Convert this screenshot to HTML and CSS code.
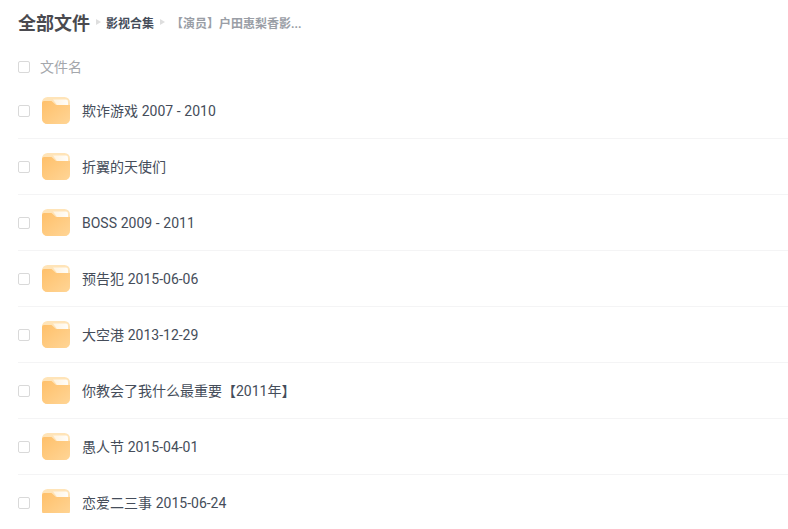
FILE: index.html
```html
<!DOCTYPE html>
<html lang="zh-CN">
<head>
<meta charset="utf-8">
<title>全部文件</title>
<link rel="stylesheet" href="styles.css">
</head>
<body>
<svg class="defs" width="0" height="0" aria-hidden="true">
  <defs>
    <linearGradient id="fg" x1="0" y1="0" x2="1" y2="1">
      <stop offset="0" stop-color="#ffc06a"/>
      <stop offset="1" stop-color="#ffd596"/>
    </linearGradient>
    <linearGradient id="fs" x1="0" y1="0" x2="1" y2="0">
      <stop offset="0" stop-color="#fff3df"/>
      <stop offset="1" stop-color="#fffdf9"/>
    </linearGradient>
  </defs>
  <symbol id="folder" viewBox="0 0 28 27">
    <rect x="0" y="0" width="28" height="27" rx="5.500" fill="#ffe4b8"/>
    <path d="M11 2.500h13a2 2 0 0 1 2 2V8H15z" fill="url(#fs)"/>
    <path d="M0 6a2 2 0 0 1 2-2H9.500L14 8H28V21.500a5.500 5.500 0 0 1-5.500 5.500H5.500a5.500 5.500 0 0 1-5.500-5.500z" fill="url(#fg)"/>
  </symbol>
</svg>
<main class="page">
  <nav class="crumbs">
    <span class="crumb-root">全部文件</span>
    <span class="arrow"></span>
    <span class="crumb-mid">影视合集</span>
    <span class="arrow"></span>
    <span class="crumb-last">【演员】户田惠梨香影...</span>
  </nav>
  <div class="head-row">
    <span class="check"></span>
    <span class="head-label">文件名</span>
  </div>
  <ul class="list">
    <li class="row"><span class="check"></span><svg class="folder"><use href="#folder"/></svg><span class="name">欺诈游戏 2007 - 2010</span></li>
    <li class="row"><span class="check"></span><svg class="folder"><use href="#folder"/></svg><span class="name">折翼的天使们</span></li>
    <li class="row"><span class="check"></span><svg class="folder"><use href="#folder"/></svg><span class="name">BOSS 2009 - 2011</span></li>
    <li class="row"><span class="check"></span><svg class="folder"><use href="#folder"/></svg><span class="name">预告犯 2015-06-06</span></li>
    <li class="row"><span class="check"></span><svg class="folder"><use href="#folder"/></svg><span class="name">大空港 2013-12-29</span></li>
    <li class="row"><span class="check"></span><svg class="folder"><use href="#folder"/></svg><span class="name">你教会了我什么最重要【2011年】</span></li>
    <li class="row"><span class="check"></span><svg class="folder"><use href="#folder"/></svg><span class="name">愚人节 2015-04-01</span></li>
    <li class="row"><span class="check"></span><svg class="folder"><use href="#folder"/></svg><span class="name">恋爱二三事 2015-06-24</span></li>
  </ul>
</main>
</body>
</html>
```
FILE: styles.css
```css
* { box-sizing: border-box; }
html, body { margin: 0; padding: 0; background: #fff; }
body {
  height: 529px;
  overflow: hidden;
  font-family: Roboto, "Noto Sans CJK SC", sans-serif;
  color: #454d5a;
}
.defs { position: absolute; }
.page { padding-left: 18px; }
.crumbs {
  display: flex;
  align-items: center;
  height: 44px;
  white-space: nowrap;
}
.crumb-root { font-size: 18px; font-weight: 700; color: #4a4a4f; }
.crumb-mid { font-size: 12px; font-weight: 700; color: #454d5a; }
.crumb-last { font-size: 12px; font-weight: 700; color: #9a9ea6; margin-left: 1px; }
.arrow {
  width: 0;
  height: 0;
  margin: 0 5px 0 6px;
  border-left: 5px solid #dedede;
  border-top: 3.500px solid transparent;
  border-bottom: 3.500px solid transparent;
}
.head-row {
  display: flex;
  align-items: center;
  height: 46px;
}
.head-label { font-size: 14px; line-height: 20px; color: #a4a7ac; margin-left: 10px; }
.check {
  flex: none;
  width: 12px;
  height: 12px;
  border: 1px solid #d9d9d9;
  border-radius: 2px;
  background: #fff;
}
.list {
  list-style: none;
  margin: -7px 0 0;
  padding: 0;
  height: 430px;
  overflow: hidden;
}
.row {
  display: flex;
  align-items: center;
  height: 56px;
  border-bottom: 1px solid #f4f4f5;
}
.folder { flex: none; width: 28px; height: 27px; margin-left: 12px; }
.name { font-size: 14px; line-height: 20px; margin-left: 12px; color: #454d5a; word-spacing: 0.2px; }
```
